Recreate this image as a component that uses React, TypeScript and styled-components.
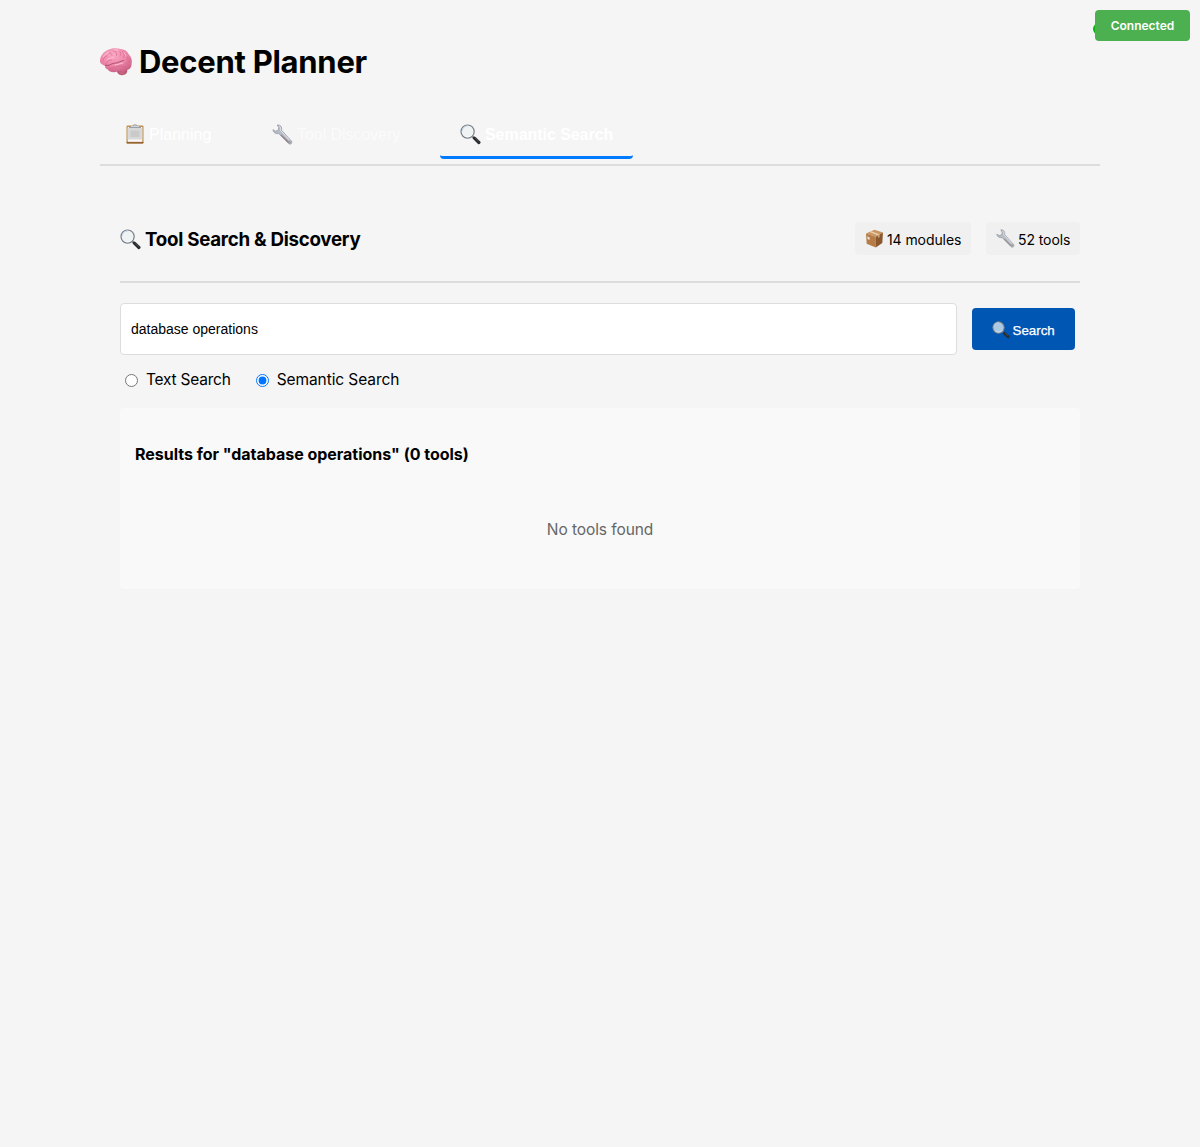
import React, { useState } from "react";
import styled, { createGlobalStyle } from "styled-components";

const GlobalStyle = createGlobalStyle`
  *, *::before, *::after { box-sizing: border-box; }
  body {
    margin: 0;
    background: #f5f5f5;
    color: #000;
    font-family: Inter, "Noto Sans", sans-serif;
    font-size: 16px;
  }
`;

const Page = styled.main`
  width: 1000px;
  min-height: 1147px;
  margin: 0 auto;
  padding-top: 43px;
`;

const Label = styled.span<{ $track?: number; $drop?: number }>`
  padding-top: ${(p) => p.$drop ?? 0}px;
  letter-spacing: ${(p) => p.$track ?? 0}px;
  white-space: nowrap;
`;

const Title = styled.h1`
  display: flex;
  align-items: center;
  gap: 7px;
  height: 38px;
  margin: 0 0 29px;
  font-size: 31px;
  font-weight: 700;
  line-height: 36px;
`;

const TabBar = styled.nav`
  display: flex;
  gap: 10px;
  height: 56px;
  border-bottom: 2px solid #ddd;
`;

const Tab = styled.button<{ $tone: string; $active?: boolean; $width: number }>`
  display: flex;
  align-items: center;
  gap: 4px;
  width: ${(p) => p.$width}px;
  height: 49px;
  margin: 0 5px;
  padding: 2px 0 0 20px;
  border: 0;
  border-bottom: 3px solid ${(p) => (p.$active ? "#007bff" : "transparent")};
  border-radius: 4px;
  background: transparent;
  color: ${(p) => p.$tone};
  font: ${(p) => (p.$active ? 700 : 400)} 16px/24px "Liberation Sans", Arial, sans-serif;
  cursor: pointer;
`;

const Panel = styled.section`
  padding: 20px;
`;

const PanelHeader = styled.header`
  display: flex;
  align-items: center;
  justify-content: space-between;
  height: 97px;
  padding-top: 10px;
  border-bottom: 2px solid #ddd;
`;

const PanelTitle = styled.h2`
  display: flex;
  align-items: center;
  gap: 4px;
  margin: 2px 0 0;
  font-size: 18.72px;
  font-weight: 700;
  line-height: 24px;
`;

const Stats = styled.div`
  display: flex;
  gap: 15px;
`;

const Stat = styled.span<{ $width: number }>`
  display: flex;
  align-items: center;
  gap: 3px;
  width: ${(p) => p.$width}px;
  height: 33px;
  padding-left: 10px;
  border-radius: 4px;
  background: #f0f0f0;
  font-size: 14px;
`;

const SearchRow = styled.form`
  display: flex;
  align-items: center;
  gap: 15px;
  margin-top: 20px;
  padding-right: 5px;
`;

const SearchInput = styled.input`
  flex: 1;
  height: 52px;
  padding: 0 10px;
  border: 1px solid #ddd;
  border-radius: 4px;
  outline: 0;
  background: #fff;
  color: #000;
  font: 14px "Liberation Sans", Arial, sans-serif;
`;

const SearchButton = styled.button`
  display: flex;
  align-items: center;
  gap: 3px;
  width: 103px;
  height: 42px;
  padding: 1px 0 0 19.5px;
  border: 0;
  border-radius: 4px;
  background: #0056b3;
  color: #fff;
  font: 13.333px "Liberation Sans", Arial, sans-serif;
  -webkit-text-stroke: 0.25px #fff;
  cursor: pointer;
`;

const Modes = styled.div`
  display: flex;
  gap: 25px;
  height: 53px;
  padding: 14px 0 0 5px;
`;

const Mode = styled.label`
  display: flex;
  align-items: flex-start;
  gap: 8px;
  height: 22px;
  font-size: 15.5px;
  line-height: 22px;
`;

const Radio = styled.input`
  width: 13px;
  height: 13px;
  margin: 5px 0 0;
  accent-color: #0075ff;
`;

const Results = styled.section`
  height: 181px;
  padding: 36px 15px 0;
  border-radius: 4px;
  background: #f9f9f9;
`;

const ResultsTitle = styled.h3`
  margin: 0;
  font-size: 16px;
  font-weight: 700;
  line-height: 20px;
`;

const Empty = styled.p`
  margin: 56px 0 0;
  color: #666;
  font-size: 15.5px;
  line-height: 20px;
  text-align: center;
`;

const Status = styled.div`
  position: fixed;
  top: 10px;
  right: 10px;
  display: flex;
  align-items: center;
  justify-content: center;
  width: 95px;
  height: 31px;
  border-radius: 4px;
  background: #4caf50;
  color: #fff;
  font-size: 12px;
  font-weight: 600;
`;

const StatusDot = styled.span`
  position: fixed;
  top: 23px;
  right: 95px;
  width: 12px;
  height: 12px;
  border-radius: 50%;
  background: #09b411;
`;

const Glyph = styled.svg`
  flex: none;
  display: block;
`;

function Brain() {
  return (
    <Glyph width="32" height="32" viewBox="0 0 32 32">
      <defs>
        <radialGradient id="brainFill" cx="0.42" cy="0.28" r="0.75">
          <stop offset="0" stopColor="#fba9c4" />
          <stop offset="0.55" stopColor="#ee87a9" />
          <stop offset="1" stopColor="#cb6085" />
        </radialGradient>
      </defs>
      <path d="M16.500 23.500c.3 3.200 2.200 5.600 5.200 5.700 3.200.1 5.600-1.800 5.600-4.700l-2-4z" fill="#bd5672" />
      <path d="M0 15.500C-.3 10.500 3.200 5.800 7.700 3.900c3.500-2 9.300-2.300 12.800-.8 4 .2 7 2.300 8.300 5.300 2.700 2.500 3.700 6.500 2.700 9.500.3 3.700-2.500 6.300-6 6.300-2.500 1.500-5 1.200-7.500.8-3.500 2-8.200 1.700-10.200-1.500-1.900-.5-3-1.800-2.700-3.500C2.500 18.800.2 17.500 0 15.500z" fill="url(#brainFill)" />
      <path d="M3 15c0-3 2-4.500 4-5M6 18.500c.5-3.500 3-4.500 5.500-4.500M9 7c2 0 3 1 3 2.500M13.500 5c2.500.5 3.500 2 3 4.500M18 4.500c3 1 3.500 3 2 5.500M22.500 5.500c2 2 2.300 4 1 6M26 8.500c1.700 2 1.700 4 .5 6M29 13c0 3-1 4.500-3 5M9 22c4 1 6-1 9-1.500 3-.5 5-.5 8 1" fill="none" stroke="#cf698d" strokeWidth="0.650" strokeLinecap="round" />
      <path d="M5.500 19.500c4 .7 6-2.300 9-2.300 4 0 5-2 9-2.700" fill="none" stroke="#ad496d" strokeWidth="0.900" strokeLinecap="round" />
      <path d="M3.500 10.500c1-2 3-3.800 5-4M14 3.900c2-.4 4 0 5 .8M7.500 13.500c2-1.500 4-1 6-2M15 19c3-.5 5-1.500 8-2M24 7c1.500.7 2 2 2 3" fill="none" stroke="#ffc5d8" strokeWidth="0.900" strokeLinecap="round" />
      <path d="M19 26c2 .5 4 .2 6-1M20 27.500c1.500.3 3 0 4.500-.8" fill="none" stroke="#d78097" strokeWidth="0.500" />
    </Glyph>
  );
}

function Clipboard() {
  return (
    <Glyph width="20" height="22" viewBox="0 0 20 22">
      <rect x="1.500" y="2.500" width="17" height="18" rx="1.200" fill="#c28d43" />
      <rect x="1.500" y="18.800" width="17" height="1.700" rx="0.700" fill="#926333" />
      <rect x="2.700" y="4" width="14.600" height="14.800" fill="#f8f8f8" />
      <rect x="2.700" y="5" width="14.600" height="11.500" fill="#d8d8d8" />
      <rect x="5.500" y="7.500" width="9" height="6.500" fill="#cacaca" />
      <path d="M4 5V3.200h4C8 .4 12 .4 12 3.200h4V5z" fill="#9ba1a7" />
      <path d="M6 3.500h8M9 2.100h2" stroke="#ccd5dd" strokeWidth="1" />
    </Glyph>
  );
}

function Wrench({ size = 21 }: { size?: number }) {
  return (
    <Glyph width={size} height={size} viewBox="0 0 21 21">
      <path d="M5.300 1C8.200.5 10.400 3.100 9.500 6.200l9.700 10.600c1.800 2-.6 4.500-2.600 2.700L6.700 9.500C4 10.300.9 8.400 1 5.600l2.200 1.600 3-.7.600-2.800z" fill="#b7bcc5" stroke="#8b929d" strokeWidth="0.700" strokeLinejoin="round" />
      <path d="M7 2c1.600 1 2 2.700 1.500 4.400l9.200 9.900" fill="none" stroke="#e5e9ee" strokeWidth="0.900" />
      <path d="m9 10.800 7.700 7.700" stroke="#94797c" strokeWidth="1.100" />
      <circle cx="17.600" cy="18.100" r="0.800" fill="#eee" stroke="#786d70" strokeWidth="0.600" />
    </Glyph>
  );
}

function Magnifier({ size = 21, lens = "#f0f3f4" }: { size?: number; lens?: string }) {
  return (
    <Glyph width={size} height={size} viewBox="0 0 21 21">
      <path d="m12.500 12.500 2.600 2.600" stroke="#777d83" strokeWidth="1.800" />
      <path d="m14.400 14.200 4.500 4.300" stroke="#282b2e" strokeWidth="3.200" strokeLinecap="round" />
      <path d="m15.100 13.900 4 3.700" stroke="#686d71" strokeWidth="0.600" />
      <circle cx="7.600" cy="7.600" r="6.600" fill={lens} stroke="#777e86" strokeWidth="1.200" />
      <path d="M2.300 6.800A5.500 5.500 0 0 1 7.700 2" fill="none" stroke="#c0d4e4" strokeWidth="1" />
      <path d="M4 11.700a5.500 5.500 0 0 0 8.500-1.500" fill="none" stroke="#fff" strokeWidth="0.500" />
    </Glyph>
  );
}

function Package() {
  return (
    <Glyph width="19" height="19" viewBox="0 0 19 19">
      <path d="M1 4.500 9.500.8 18 3.600l-7.200 4.200z" fill="#c99562" />
      <path d="m1 4.500 9.800 3.300v10.600L1.700 14.700z" fill="#b67c48" />
      <path d="m10.800 7.800 7.200-4.200-.7 10.500-6.500 4.300z" fill="#8b582e" />
      <path d="m4.500 3 1.900-.8 8.300 3.200-1.800 1.100z" fill="#ead0aa" />
      <path d="m2.300 7.400 2.300.8v2.700l-2.100-.8z" fill="#eee2d2" />
      <path d="m12.900 6.500 1.800-1.100v2.500l-1.800 1.200z" fill="#c6a17a" />
    </Glyph>
  );
}

export default function App() {
  const [query, setQuery] = useState("database operations");
  const [mode, setMode] = useState("semantic");
  return (
    <>
      <GlobalStyle />
      <StatusDot />
      <Status><Label>Connected</Label></Status>
      <Page>
        <Title><Brain /><Label $track={-0.27}>Decent Planner</Label></Title>
        <TabBar>
          <Tab $tone="#fff" $width={127}><Clipboard /><Label $drop={2}>Planning</Label></Tab>
          <Tab $tone="#fbfbfb" $width={168}><Wrench /><Label $drop={2} $track={-0.05}>Tool Discovery</Label></Tab>
          <Tab $tone="#fff" $width={193} $active><Magnifier /><Label $drop={2} $track={-0.05}>Semantic Search</Label></Tab>
        </TabBar>
        <Panel>
          <PanelHeader>
            <PanelTitle><Magnifier /><Label $track={-0.26}>Tool Search &amp; Discovery</Label></PanelTitle>
            <Stats>
              <Stat $width={116}><Package /><Label $track={-0.08} $drop={2}>14 modules</Label></Stat>
              <Stat $width={94}><Wrench size={19} /><Label $track={-0.08} $drop={2}>52 tools</Label></Stat>
            </Stats>
          </PanelHeader>
          <SearchRow onSubmit={(e) => e.preventDefault()}>
            <SearchInput value={query} onChange={(e) => setQuery(e.target.value)} />
            <SearchButton><Magnifier size={18} lens="#acc8e3" /><Label $drop={1}>Search</Label></SearchButton>
          </SearchRow>
          <Modes>
            <Mode><Radio type="radio" name="mode" checked={mode === "text"} onChange={() => setMode("text")} /><Label $track={-0.22}>Text Search</Label></Mode>
            <Mode><Radio type="radio" name="mode" checked={mode === "semantic"} onChange={() => setMode("semantic")} /><Label $track={-0.09}>Semantic Search</Label></Mode>
          </Modes>
          <Results>
            <ResultsTitle><Label $track={-0.02}>Results for "database operations" (0 tools)</Label></ResultsTitle>
            <Empty><Label $track={-0.08}>No tools found</Label></Empty>
          </Results>
        </Panel>
      </Page>
    </>
  );
}
